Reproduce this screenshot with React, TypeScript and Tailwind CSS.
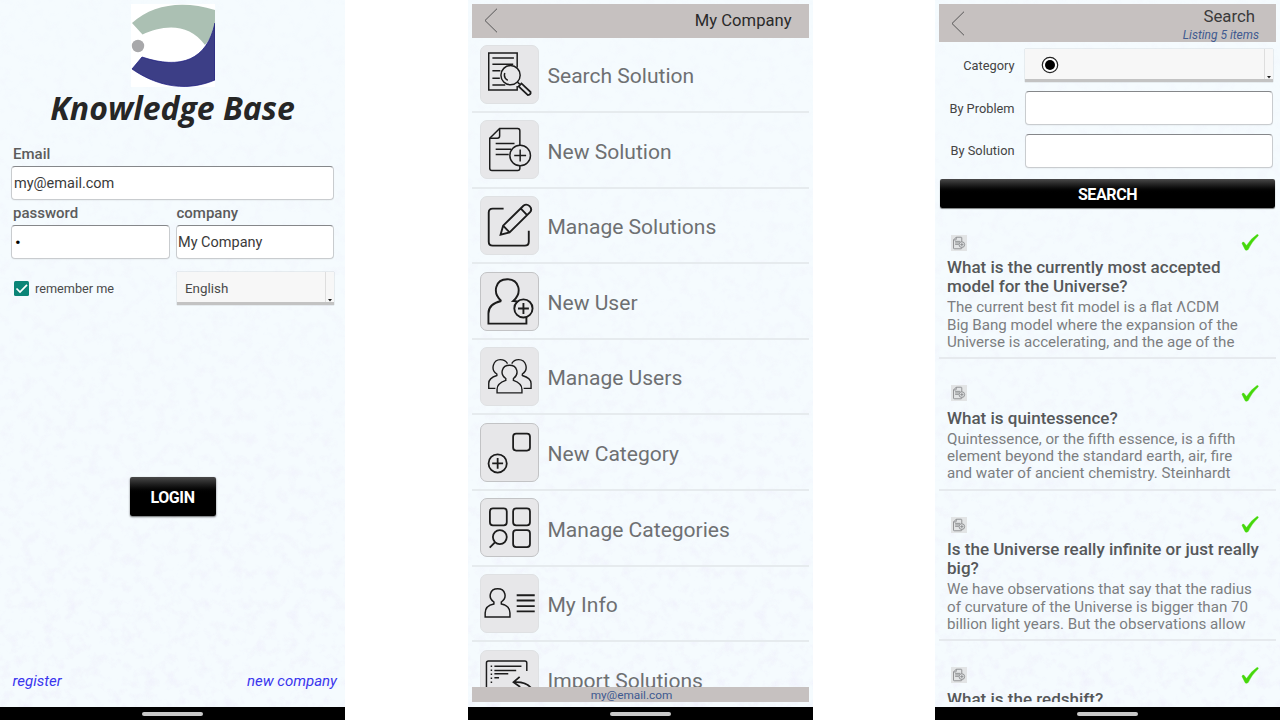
import React from "react";

const FONT = "font-['Roboto','Liberation_Sans',sans-serif]";

function Texture({ id }: { id: string }) {
  return (
    <svg className="pointer-events-none absolute inset-0 h-full w-full" aria-hidden="true">
      <filter id={id} x="0" y="0" width="100%" height="100%">
        <feTurbulence type="fractalNoise" baseFrequency="0.09" numOctaves="3" seed="7" />
        <feColorMatrix values="0 0 0 0 0.87  0 0 0 0 0.88  0 0 0 0 0.97  2.6 0 0 0 -1.25" />
      </filter>
      <linearGradient id={id + "-fade"} x1="0" y1="0" x2="0" y2="1">
        <stop offset="0" stopColor="#fff" stopOpacity="0.15" />
        <stop offset="1" stopColor="#fff" stopOpacity="0.9" />
      </linearGradient>
      <mask id={id + "-mask"}>
        <rect width="100%" height="100%" fill={`url(#${id}-fade)`} />
      </mask>
      <g mask={`url(#${id}-mask)`}>
        <rect width="100%" height="100%" filter={`url(#${id})`} />
      </g>
    </svg>
  );
}

function Phone({ id, children }: { id: string; children: React.ReactNode }) {
  return (
    <section className="flex h-[720px] w-[345px] shrink-0 flex-col bg-[#f5fbfe]">
      <div className="relative h-[707px] overflow-hidden">
        <Texture id={id} />
        <div className="relative flex h-full flex-col">{children}</div>
      </div>
      <div className="flex h-[13px] justify-center bg-black pt-[5px]">
        <div className="h-[4px] w-[61px] rounded-sm bg-[#c9c9c9]" />
      </div>
    </section>
  );
}

const field =
  "flex items-center rounded-[4px] border border-[#c9cccf] border-t-[#85878a] bg-white text-[14.5px] text-[#3a3a3a] shadow-[0_1px_1px_rgba(0,0,0,0.04)]";

function Logo() {
  return (
    <svg className="mr-auto ml-[130.500px] mt-[4px] h-[83px] w-[84px] shrink-0" viewBox="0 0 84 83">
      <rect width="84" height="83" fill="#fff" />
      <path d="M1 19C22 0 52-4 84 6V21Q81 33 74 41C58 18 31 21 11.500 30.500Z" fill="#abc0b3" />
      <path d="M84 19V76C51 90 21 79 1 65L11 53C50 66 76 56 84 19Z" fill="#3c3e86" stroke="#17177f" strokeWidth=".7" />
      <circle cx="7" cy="42" r="6.200" fill="#a8a8aa" />
    </svg>
  );
}

function Login() {
  return (
    <Phone id="paper-a">
      <Logo />
      <h1 className="mt-[2px] h-[43px] text-center font-['Open_Sans','Noto_Sans',sans-serif] text-[32px] leading-[38px] font-bold text-[#262626] italic">
        Knowledge Base
      </h1>
      <div className="px-[11px]">
        <label className="mt-[14px] block h-[20px] pl-[2px] text-[15px] leading-[17px] font-medium text-[#5c5c5c]">Email</label>
        <div className={`${field} h-[34px] pt-[2px] pl-[2px]`}>my@email.com</div>
        <div className="mt-[5px] flex gap-[6px]">
          <div className="w-[159px]">
            <label className="block h-[20px] pl-[2px] text-[15px] leading-[17px] font-medium text-[#5c5c5c]">password</label>
            <div className={`${field} h-[34px] pt-[1px] pl-[3px]`}>
              <span className="text-[17px] text-black">•</span>
            </div>
          </div>
          <div className="w-[159px]">
            <label className="block h-[20px] pl-[1px] text-[15px] leading-[17px] font-medium text-[#5c5c5c]">company</label>
            <div className={`${field} h-[34px] pt-[2px] pl-[1.5px]`}>My Company</div>
          </div>
        </div>
        <div className="mt-[13px] flex h-[33px] items-center">
          <svg className="ml-[3px] h-[15px] w-[15px]" viewBox="0 0 15 15">
            <rect width="15" height="15" rx="1.500" fill="#0b8577" />
            <path d="M2.500 7.500L6 11L13 3.800" fill="none" stroke="#fff" strokeWidth="1.700" />
          </svg>
          <span className="ml-[6px] w-[142px] pt-[1px] text-[12.7px] text-[#4a4a4a]">remember me</span>
          <Select className="w-[157px]">
            <span className="pt-[4px] pl-[8px] text-[13.4px] text-[#4a4a4a]">English</span>
          </Select>
        </div>
      </div>
      <div className="mt-[172px] flex justify-center">
        <button className="h-[39px] w-[86px] rounded-[2px] bg-linear-to-b from-[#4a4a4a] via-black via-45% to-black pt-[2px] text-[16px] font-bold tracking-[-0.4px] text-white shadow-[0_1px_2px_rgba(0,0,0,0.6)]">
          LOGIN
        </button>
      </div>
      <div className="mt-[154px] flex justify-between pr-[8px] pl-[12.5px] text-[15px] leading-[22px] text-[#3a36ee] italic">
        <a>register</a>
        <a>new company</a>
      </div>
    </Phone>
  );
}

function Select({ className, children }: { className: string; children?: React.ReactNode }) {
  return (
    <div className={`${className} flex h-[33px] items-stretch border-b-[3px] border-[#c3c3c3] bg-[#f7f7f7] shadow-[0_0_1px_rgba(0,0,0,0.35)]`}>
      <div className="flex flex-1 items-center border-r border-[#dedede]">{children}</div>
      <div className="flex w-[8px] items-end justify-center">
        <svg className="h-[4px] w-[4px]" viewBox="0 0 4 4">
          <path d="M0 1H4L2 3.500Z" fill="#222" />
        </svg>
      </div>
    </div>
  );
}

function Back({ className }: { className: string }) {
  return (
    <svg className={`${className} h-[25px] w-[14px]`} viewBox="0 0 14 25">
      <path d="M13 .7L1 12.500L13 24.300" fill="none" stroke="#555" strokeWidth="1" />
    </svg>
  );
}

const docPlus = (
  <>
    <path d="M39.700 25V10Q39.700 7.700 37.400 7.700H19.300L9.300 17.700V48Q9.300 50.300 11.600 50.300H37.400Q39.700 50.300 39.700 48V45.500" />
    <path d="M9.300 17.700H17Q19.300 17.700 19.300 15.500V7.700M15.300 23H34.300M15.300 28.700H31M15.300 34H28.500" />
    <circle cx="40" cy="35" r="10.400" />
    <path d="M34 35H46M40 29V41" />
  </>
);

const menu: { label: string; outlined?: boolean; weight: number; icon: React.ReactNode }[] = [
  {
    label: "Search Solution",
    weight: 1.5,
    icon: (
      <>
        <path d="M37 22V7.300H8.300V44.700H37V40.500" />
        <path d="M12 12.300H33.700M12 18.700H33M12 25.300H20M12 32.700H19.500M12 39.700H25" />
        <circle cx="30.300" cy="29.700" r="9.700" />
        <path d="M24.500 27.500C23.500 30.500 25 33.500 27.500 35M37.300 36.700L39.500 38.700" />
        <path strokeWidth="1.800" d="M38.500 41L41.300 38L50.500 46.700Q51 49.500 47.800 49.800Z" />
      </>
    ),
  },
  { label: "New Solution", weight: 1.5, icon: docPlus },
  {
    label: "Manage Solutions",
    weight: 1.9,
    icon: (
      <>
        <path d="M23.300 12H12.300Q8.300 12 8.300 16V45.300Q8.300 49.300 12.300 49.300H44.700Q48.700 49.300 48.700 45.300V34.300" />
        <path d="M20.300 38.200L22.800 29.200L43.500 8.800Q46.500 6.800 49.500 9.500Q52.500 12.500 50 15.500L29.300 36L20.300 38.200ZM22.800 29.200L29.300 36M40.500 11.800L47 18.500" />
      </>
    ),
  },
  {
    label: "New User",
    outlined: true,
    weight: 1.9,
    icon: (
      <>
        <path d="M21 28.500C11.500 20 15 6.500 27 6.500S42.500 20 33 28.500Q36 28.600 38 29.500M21 28.500C14 30 8 34 8 41V51.300H46.300V45" />
        <circle cx="43.300" cy="36" r="9.200" />
        <path d="M37.800 36H48.800M43.300 30.500V41.500" />
      </>
    ),
  },
  {
    label: "Manage Users",
    weight: 1.4,
    icon: (
      <>
        <path d="M16.700 45.500V42C16.700 37 20.500 34.700 25.500 33V31C19 26.500 21.500 17.700 29.300 17.700S39.500 26.500 33.200 31V33C38 34.700 41.800 37 41.800 42V45.500Z" />
        <path d="M15 41H8.300V36C8.300 31.500 11.500 29.500 16.500 28V26.500C9.500 22 13 12 20 12Q25 12 27.300 16M43.500 41H51V36C51 31.500 47 29.500 42.200 28V26.500C49 22 46 12 38.500 12Q33.600 12 31.500 16" />
      </>
    ),
  },
  {
    label: "New Category",
    outlined: true,
    weight: 1.8,
    icon: (
      <>
        <rect x="32.900" y="10" width="17" height="17" rx="3" />
        <circle cx="17.300" cy="40" r="9.200" />
        <path d="M11.800 40H22.800M17.300 34.500V45.500" />
      </>
    ),
  },
  {
    label: "Manage Categories",
    outlined: true,
    weight: 1.8,
    icon: (
      <>
        <rect x="9.500" y="9.800" width="17" height="17" rx="3" />
        <rect x="32.900" y="9.800" width="17" height="17" rx="3" />
        <rect x="32.900" y="31.700" width="17" height="17" rx="3" />
        <circle cx="19.500" cy="38.700" r="7" />
        <path d="M14.500 44L9.300 49.300" />
      </>
    ),
  },
  {
    label: "My Info",
    weight: 1.5,
    icon: (
      <>
        <path d="M4.700 42.700V38.500C4.700 33 8.500 30.500 13.500 29.500V27.500C7 23 9.500 14.200 17.300 14.200S27.500 23 21 27.500V29.500C26 30.500 29.700 33 29.700 38.500V42.700Z" />
        <path strokeWidth="1.900" d="M36.500 20.700H54.700M36.500 26H54.700M36.500 31.700H54.700M36.500 37H54.700" />
      </>
    ),
  },
  {
    label: "Import Solutions",
    weight: 1.5,
    icon: (
      <>
        <path d="M6 50V12.300Q6 10.300 8 10.300H44.700Q46.700 10.300 46.700 12.300V20.300M14 15.700H41.300M14 20H36M14 23.300H28M14 27.300H18.700" />
        <path strokeDasharray="1.500 2.500" d="M11 15V33" />
        <path strokeWidth="1.800" d="M39.500 26.300L33.300 31.700L40 36.500M33.300 31.700C43 31 49 33 52.500 40" />
      </>
    ),
  },
];

function Menu() {
  return (
    <Phone id="paper-b">
      <header className="mx-[4px] mt-[4px] flex h-[33.5px] shrink-0 items-center justify-between bg-[#c6c1c0] pr-[17px]">
        <Back className="ml-[12px]" />
        <span className="pt-[2px] text-[16.6px] text-[#2a2a2a]">My Company</span>
      </header>
      <ul className="mx-[4px] h-[649.500px] overflow-hidden">
        {menu.map((m) => (
          <li key={m.label} className="flex h-[75.6px] items-center border-b-2 border-[#e6ebee]">
            <svg
              className={
                m.outlined
                  ? "ml-[8px] h-[59px] w-[59.500px] shrink-0 rounded-[7px] border border-[#c2c3c5] bg-[#e7e7e9]"
                  : "ml-[8px] h-[59px] w-[59.500px] shrink-0 rounded-[7px] border border-[#dfe1e3] bg-[#e7e7e9]"
              }
              viewBox="0.5 0.5 58 57"
              fill="none"
              stroke="#1c1c1c"
              strokeWidth={m.weight}
            >
              {m.icon}
            </svg>
            <span className="ml-[8.500px] pt-[3px] text-[21.05px] whitespace-nowrap text-[#6e7072]">{m.label}</span>
          </li>
        ))}
      </ul>
      <footer className="mx-[4px] flex h-[15px] shrink-0 items-center justify-center bg-[#c6c1c0] pt-[2px] pr-[17px] text-[11.8px] text-[#405a90]">
        my@email.com
      </footer>
    </Phone>
  );
}

const results = [
  {
    title: ["What is the currently most accepted", "model for the Universe?"],
    body: ["The current best fit model is a flat ΛCDM", "Big Bang model where the expansion of the", "Universe is accelerating, and the age of the"],
  },
  {
    title: ["What is quintessence?"],
    body: ["Quintessence, or the fifth essence, is a fifth", "element beyond the standard earth, air, fire", "and water of ancient chemistry. Steinhardt"],
  },
  {
    title: ["Is the Universe really infinite or just really", "big?"],
    body: ["We have observations that say that the radius", "of curvature of the Universe is bigger than 70", "billion light years. But the observations allow"],
  },
  { title: ["What is the redshift?"], body: [] },
];

function FormRow({ label, children }: { label: string; children: React.ReactNode }) {
  return (
    <div className="flex h-[33.5px] items-center">
      <label className="w-[79.500px] text-right text-[12.8px] text-[#444]">{label}</label>
      <div className="ml-[10.500px] flex-1">{children}</div>
    </div>
  );
}

function Search() {
  return (
    <Phone id="paper-c">
      <header className="mx-[4px] mt-[4px] flex h-[38px] shrink-0 items-start justify-between bg-[#c6c1c0] pr-[17px]">
        <Back className="mt-[7px] ml-[12px]" />
        <div className="flex flex-col items-end">
          <span className="mt-[2px] mr-[4px] text-[16.8px] leading-[20px] text-[#3a3a3a]">Search</span>
          <span className="text-[12px] leading-[18px] text-[#405a90] italic">Listing 5 items</span>
        </div>
      </header>
      <div className="mt-[7px] flex shrink-0 flex-col gap-[9px] pr-[7px]">
        <FormRow label="Category">
          <Select className="w-full">
            <svg className="mt-[2px] ml-[15.500px] h-[18px] w-[18px]" viewBox="0 0 18 18">
              <circle cx="9" cy="9" r="7.700" fill="#fff" stroke="#222" strokeWidth="1.200" />
              <circle cx="9" cy="9" r="5" fill="#000" />
            </svg>
          </Select>
        </FormRow>
        <FormRow label="By Problem">
          <div className={`${field} h-[34px]`} />
        </FormRow>
        <FormRow label="By Solution">
          <div className={`${field} h-[34px]`} />
        </FormRow>
      </div>
      <button className="mx-[5px] mt-[11.500px] h-[29px] shrink-0 rounded-[2px] bg-linear-to-b from-[#4a4a4a] via-black via-50% to-black pt-[2px] text-[16px] font-bold tracking-[-0.4px] text-white shadow-[0_1px_1px_rgba(0,0,0,0.5)]">
        SEARCH
      </button>
      <div className="mx-[4px] h-[494px] overflow-hidden pt-[0.7px]">
        {results.map((r) => (
          <article key={r.title[0]} className="border-b-2 border-[#e6eaee] px-[8px] pt-[25.500px] pb-[6px] whitespace-nowrap">
            <div className="flex h-[17px] items-center justify-between pr-[9px] pl-[4px]">
              <svg className="h-[16px] w-[16px] bg-[#e2e4e5]" viewBox="0 0 59 58" fill="none" stroke="#8b8d8f" strokeWidth="3.400">
                {docPlus}
              </svg>
              <svg className="h-[17px] w-[18px]" viewBox="0 0 18 17">
                <path d="M1 9.500Q1.500 7.500 3 8.300L5.500 11.500Q9.500 4.800 16 .5Q17.500 .3 17.300 1.700Q10.500 8 7.200 15.500Q5.500 17 4.200 15.800Z" fill="#45d80a" stroke="#45d80a" strokeWidth=".4" />
              </svg>
            </div>
            <h2 className="mt-[6.700px] text-[17px] leading-[19.400px] font-medium text-[#56585a]">
              {r.title.map((t) => (
                <div key={t}>{t}</div>
              ))}
            </h2>
            <div className="mt-[2.750px] text-[15.13px] leading-[17.300px] text-[#7c7e81]">
              {r.body.map((t) => (
                <div key={t}>{t}</div>
              ))}
            </div>
          </article>
        ))}
      </div>
    </Phone>
  );
}

export default function App() {
  return (
    <main className={`${FONT} flex h-[720px] w-[1280px] justify-between overflow-hidden bg-white`}>
      <Login />
      <Menu />
      <Search />
    </main>
  );
}
